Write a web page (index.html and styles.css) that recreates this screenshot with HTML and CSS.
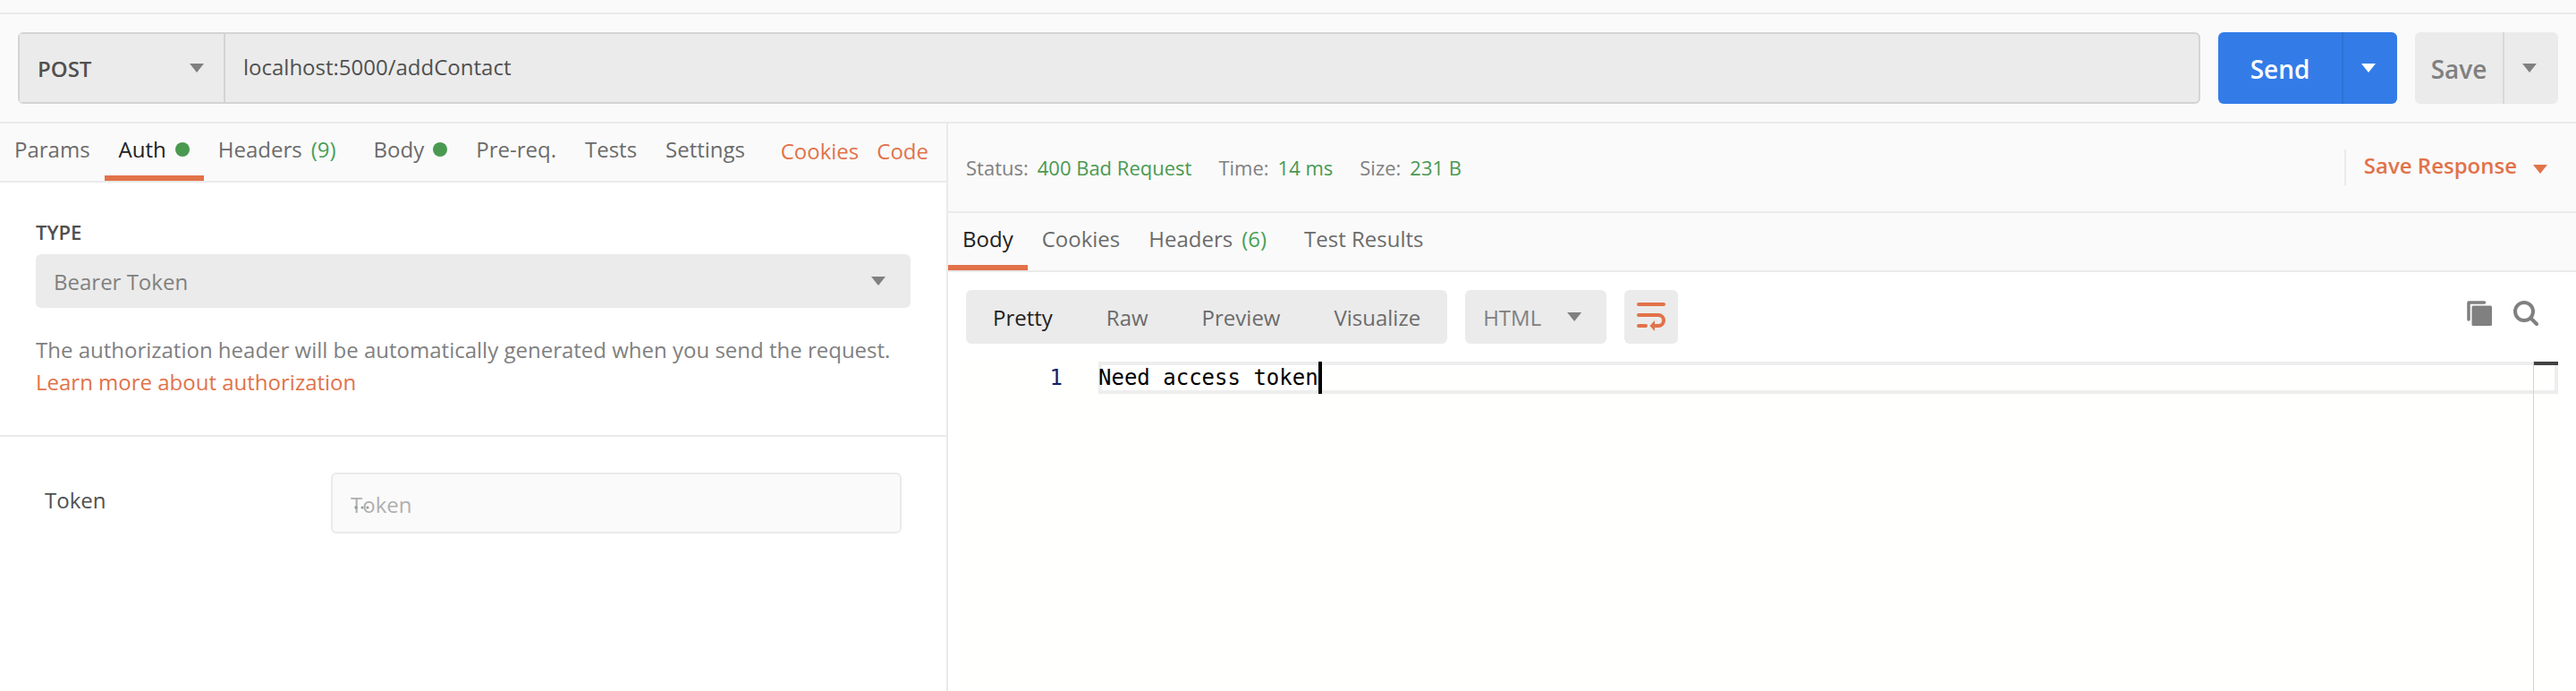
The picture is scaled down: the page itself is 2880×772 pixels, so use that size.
FILE: index.html
```html
<!DOCTYPE html>
<html lang="en">
<head>
<meta charset="utf-8">
<title>POST localhost:5000/addContact</title>
<link rel="stylesheet" href="styles.css">
</head>
<body>
<div class="app">
  <div class="top-strip"></div>
  <form class="request-bar">
    <div class="address">
      <div class="select method">
        <select aria-label="Method"><option>POST</option></select>
        <span class="caret"></span>
      </div>
      <input class="url" type="text" aria-label="Request URL" value="localhost:5000/addContact">
    </div>
    <div class="split send">
      <button type="button" class="main">Send</button>
      <button type="button" class="more" aria-label="Send options"><span class="caret"></span></button>
    </div>
    <div class="split save">
      <button type="button" class="main">Save</button>
      <button type="button" class="more" aria-label="Save options"><span class="caret"></span></button>
    </div>
  </form>

  <main class="panes">
    <section class="request">
      <nav class="tabs">
        <button type="button" class="tab">Params</button>
        <button type="button" class="tab active">Auth<span class="dot"></span></button>
        <button type="button" class="tab">Headers<span class="count">(9)</span></button>
        <button type="button" class="tab">Body<span class="dot"></span></button>
        <button type="button" class="tab">Pre-req.</button>
        <button type="button" class="tab">Tests</button>
        <button type="button" class="tab">Settings</button>
        <div class="tab-links"><a href="#cookies">Cookies</a><a href="#code">Code</a></div>
      </nav>
      <div class="auth-type">
        <label for="auth-type">TYPE</label>
        <div class="select type-select">
          <select id="auth-type"><option>Bearer Token</option></select>
          <span class="caret"></span>
        </div>
        <p>The authorization header will be automatically generated when you send the request. <a href="#learn">Learn more about authorization</a></p>
      </div>
      <div class="token-row">
        <label for="token">Token</label>
        <div class="token-field">
          <input id="token" type="text" placeholder="Token">
          <svg class="token-dots" width="18" height="4" viewBox="0 0 18 4" fill="#999" aria-hidden="true">
            <circle cx="2" cy="2" r="1.700"/><circle cx="9" cy="2" r="1.500"/><circle cx="15" cy="2" r="1.500"/>
          </svg>
        </div>
      </div>
    </section>

    <section class="response">
      <div class="status-bar">
        <div class="stat">Status:<span>400 Bad Request</span></div>
        <div class="stat">Time:<span>14 ms</span></div>
        <div class="stat">Size:<span>231 B</span></div>
        <button type="button" class="save-response"><span class="text">Save Response</span><span class="caret"></span></button>
      </div>
      <nav class="tabs">
        <button type="button" class="tab active">Body</button>
        <button type="button" class="tab">Cookies</button>
        <button type="button" class="tab">Headers<span class="count">(6)</span></button>
        <button type="button" class="tab">Test Results</button>
      </nav>
      <div class="viewer-bar">
        <div class="modes">
          <button type="button" class="active">Pretty</button>
          <button type="button">Raw</button>
          <button type="button">Preview</button>
          <button type="button">Visualize</button>
        </div>
        <div class="select format">
          <select aria-label="Format"><option>HTML</option></select>
          <span class="caret"></span>
        </div>
        <button type="button" class="wrap" aria-label="Wrap lines">
          <svg width="32" height="32" viewBox="0 0 32 32" fill="none" stroke="currentColor" stroke-width="4" stroke-linecap="round">
            <path d="M2 2H30M2 14H24a6 6 0 0 1 0 12H20M2 26H10"/>
            <path d="M14.500 26L20 20V32Z" fill="currentColor" stroke="none"/>
          </svg>
        </button>
        <div class="tools">
          <button type="button" aria-label="Copy">
            <svg width="28" height="28" viewBox="0 0 28 28">
              <path d="M2 21V2H19.500" fill="none" stroke="currentColor" stroke-width="3.500" stroke-linecap="round" stroke-linejoin="round"/>
              <rect x="4.500" y="4.500" width="23" height="23" fill="#fff"/>
              <rect x="5.500" y="5.500" width="22.500" height="22.500" rx="1.500" fill="currentColor"/>
            </svg>
          </button>
          <button type="button" aria-label="Search">
            <svg width="28" height="28" viewBox="0 0 28 28" fill="none" stroke="currentColor" stroke-width="4" stroke-linecap="round">
              <circle cx="12" cy="12" r="10"/><path d="M20 20L26 26"/>
            </svg>
          </button>
        </div>
      </div>
      <div class="editor">
        <div class="gutter">1</div>
        <div class="code"><div class="line"><span class="cursor">Need access token</span></div></div>
        <div class="ruler"></div>
      </div>
    </section>
  </main>
</div>
</body>
</html>
```
FILE: styles.css
```css
* { box-sizing: border-box; }
body {
  margin: 0;
  background: #fff;
  color: #505050;
  font: 24px/36px "Open Sans", "Noto Sans", sans-serif;
}
button, input, select {
  margin: 0;
  padding: 0;
  border: 0;
  border-radius: 0;
  background: none;
  color: inherit;
  font: inherit;
}
a { color: #e27249; text-decoration: none; }
.app { display: flex; flex-direction: column; min-height: 100vh; }
.caret {
  flex: none;
  width: 16px;
  height: 10px;
  background: currentColor;
  clip-path: polygon(0 0, 100% 0, 50% 100%);
}

.select { display: grid; align-items: center; background: #ebebeb; color: #808080; border-radius: 6px; }
.select > * { grid-area: 1 / 1; }
.select select { appearance: none; width: 100%; height: 100%; padding: 2px 20px 0; }
.select .caret { justify-self: end; pointer-events: none; }

.top-strip { height: 16px; background: #fafafa; border-bottom: 2px solid #eaeaea; }
.request-bar {
  display: flex;
  gap: 20px;
  padding: 20px;
  background: #fafafa;
  border-bottom: 2px solid #eaeaea;
}
.address {
  flex: 1;
  display: flex;
  height: 80px;
  background: #ebebeb;
  border: 2px solid #d4d4d4;
  border-radius: 6px;
}
.method { width: 230px; border-right: 2px solid #d4d4d4; border-radius: 0; }
.method select { color: #505050; font-weight: 600; }
.method .caret { margin-right: 22px; }
.url { flex: 1; padding: 0 20px 2px; }
.split { display: flex; height: 80px; border-radius: 6px; overflow: hidden; font-size: 28px; font-weight: 600; }
.split .main { flex: 1; padding-top: 2px; }
.split .more { display: grid; place-items: center; width: 62px; padding-right: 4px; border-left: 2px solid; }
.split .more .caret { background: #fff; }
.send { width: 200px; background: #337ce8; color: #fff; }
.send .more { border-color: #2f71d6; }
.save { width: 160px; background: #ebebeb; color: #808080; }
.save .more { border-color: #d9d9d9; }
.save .more .caret { background: #808080; }

.panes { flex: 1; display: grid; grid-template-columns: 1060fr 1820fr; }
.request { border-right: 2px solid #eaeaea; }
.response { display: flex; flex-direction: column; min-width: 0; }

.tabs { display: flex; height: 66px; background: #fafafa; border-bottom: 2px solid #eaeaea; }
.tab {
  display: flex;
  align-items: center;
  padding: 0 16px;
  border-bottom: 6px solid transparent;
  color: #6b6b6b;
  white-space: nowrap;
}
.tab.active { color: #212121; border-bottom-color: #e27249; }
.dot { width: 16px; height: 16px; margin-left: 10px; border-radius: 50%; background: #4a9951; }
.count { margin: 0 10px; color: #4aa155; }
.tab-links { display: flex; gap: 20px; margin-left: auto; padding: 13px 20px 0 0; }

.auth-type { padding: 37px 40px 41px; border-bottom: 2px solid #eaeaea; }
.auth-type label { display: block; padding-bottom: 7px; font-size: 22px; font-weight: 600; }
.type-select { height: 60px; }
.type-select .caret { margin-right: 28px; }
.auth-type p { margin: 29px 0 0; color: #808080; }
.token-row { display: flex; align-items: center; padding: 40px 50px; }
.token-row label { width: 320px; padding-bottom: 6px; }
.token-field { position: relative; flex: 1; }
.token-row input {
  display: block;
  width: 100%;
  height: 68px;
  padding: 2px 20px 0;
  background: #fafafa;
  border: 2px solid #eaeaea;
  border-radius: 6px;
}
.token-row input::placeholder { color: #b0b0b0; opacity: 1; }
.token-dots { position: absolute; left: 26px; top: 37px; pointer-events: none; }

.status-bar {
  display: flex;
  align-items: center;
  gap: 30px;
  height: 100px;
  padding: 0 32px 0 20px;
  background: #fafafa;
  border-bottom: 2px solid #eaeaea;
  color: #808080;
  font-size: 22px;
}
.stat { display: flex; gap: 10px; }
.stat span { color: #4a9951; }
.save-response {
  display: flex;
  align-items: center;
  gap: 18px;
  height: 40px;
  margin-left: auto;
  padding-left: 20px;
  border-left: 2px solid #eaeaea;
  color: #e27249;
  font-size: 24px;
  font-weight: 600;
}
.save-response .text { padding-bottom: 4px; }
.save-response .caret { margin-top: 4px; }

.viewer-bar { display: flex; gap: 20px; padding: 20px; }
.modes { display: flex; height: 60px; border-radius: 6px; background: #ebebeb; color: #6b6b6b; }
.modes button { padding: 2px 30px 0; }
.modes .active { color: #212121; }
.format { width: 158px; }
.format .caret { margin-right: 28px; }
.wrap { display: grid; place-items: center; width: 60px; height: 60px; border-radius: 6px; background: #ebebeb; color: #e27249; }
.tools { display: flex; gap: 24px; height: 52px; margin-left: auto; padding-right: 22px; color: #808080; }
.tools button, .tools svg { display: block; }

.editor {
  flex: 1;
  display: grid;
  grid-template-columns: 148px 1fr;
  margin: 0 20px;
  background: #fffffe;
  font-family: "DejaVu Sans Mono", monospace;
  color: #000;
}
.gutter { grid-area: 1 / 1; padding-right: 40px; color: #0b216f; text-align: right; }
.code { grid-area: 1 / 2; }
.line { height: 36px; box-shadow: inset 0 0 0 4px #eee; }
.cursor { display: inline-block; border-right: 4px solid #000; }
.ruler { grid-area: 1 / 2; justify-self: end; width: 28px; border-left: 1px solid #d3d3d3; }
.ruler::before { content: ""; display: block; height: 4px; background: #424242; }
```
